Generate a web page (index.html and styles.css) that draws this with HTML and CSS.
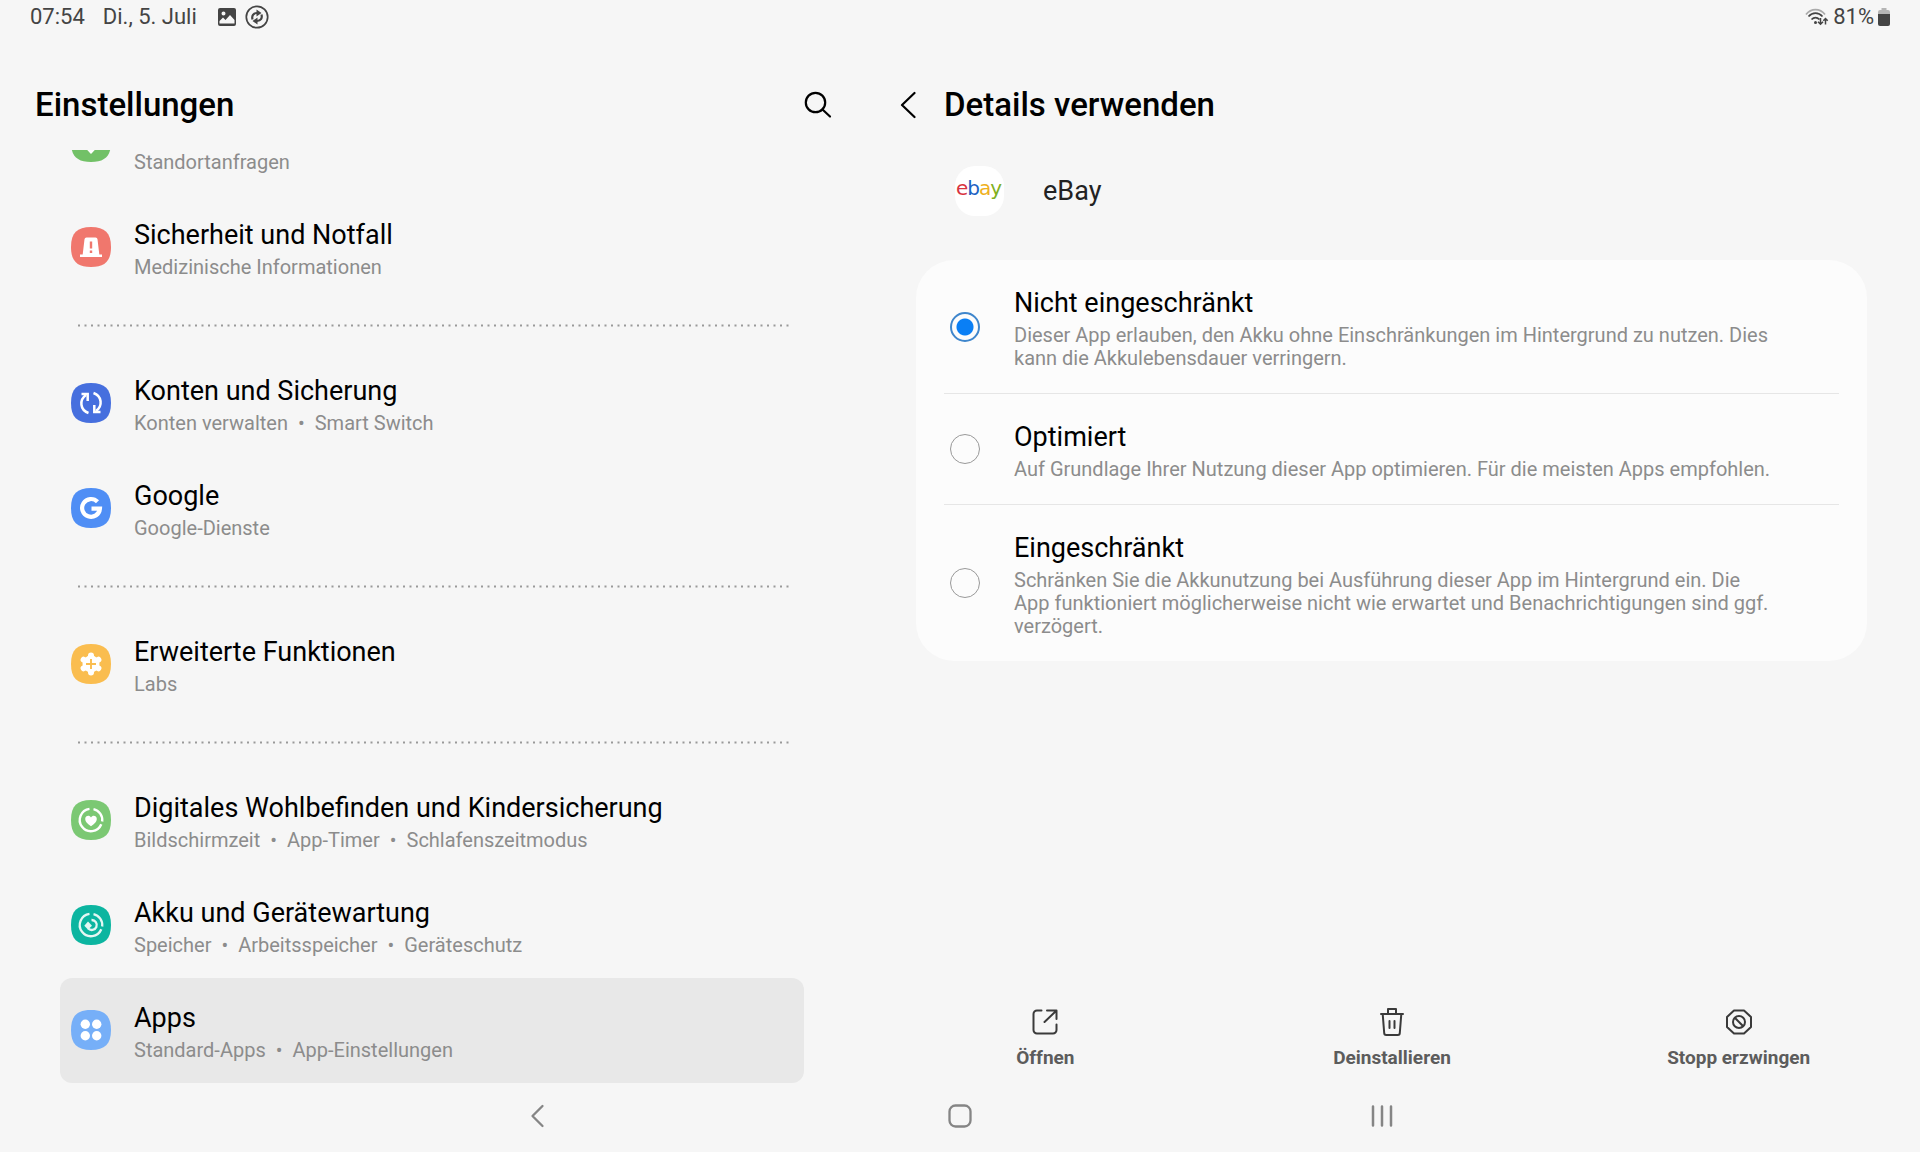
FILE: index.html
```html
<!DOCTYPE html>
<html lang="de">
<head>
<meta charset="utf-8">
<meta name="viewport" content="width=device-width, initial-scale=1">
<title>Einstellungen</title>
<link rel="stylesheet" href="styles.css">
</head>
<body>
<div class="screen">
  <header class="status-bar">
    <div class="status-left">
      <time>07:54</time>
      <span>Di., 5. Juli</span>
      <span class="status-icons">
        <svg width="18" height="18" viewBox="0 0 18 18" aria-hidden="true"><path fill="#444" fill-rule="evenodd" d="M2 0h14a2 2 0 0 1 2 2v14a2 2 0 0 1-2 2H2a2 2 0 0 1-2-2V2a2 2 0 0 1 2-2zM1.500 13v2.500h15V12l-4.500-5-4.500 5-2.500-2.500zM5.500 3.500a2 2 0 1 0 0 4 2 2 0 0 0 0-4z"/></svg>
        <svg width="24" height="24" viewBox="0 0 24 24" aria-hidden="true"><circle cx="12" cy="12" r="10.700" fill="none" stroke="#444" stroke-width="1.700"/><path fill="none" stroke="#444" stroke-width="2.200" d="M7.500 14.500c-1-4 .8-6.300 4.500-6.500M16.500 9.500c1 4-.8 6.300-4.500 6.500"/><path fill="#444" d="M11.500 4.500l5 3.500-5 3.500zM12.500 12.500l-5 3.500 5 3.500z"/></svg>
      </span>
    </div>
    <div class="status-right">
      <svg width="24" height="20" viewBox="0 0 24 20" aria-hidden="true"><g fill="none" stroke-width="1.700"><path stroke="#aaa" d="M1 7.500C6 1 15 1 20 7.500"/><path stroke="#444" d="M3.500 9.500c4-4.500 10-4.500 14 0M6.500 12.500c2.500-2.500 5.500-2.500 8 0"/><path stroke="#444" stroke-width="1.500" d="M15.500 11v6M13 14.800l2.500 2.500 2.500-2.500M20.500 17.500v-6M18.300 13.800l2.200-2.300 2.200 2.300"/></g><circle cx="10.500" cy="15.500" r="1.500" fill="#444"/></svg>
      <span>81%</span>
      <svg width="12" height="18" viewBox="0 0 12 18" aria-hidden="true"><path fill="#b5b5b5" d="M3.500 0h5v2H10a2 2 0 0 1 2 2v3H0V4a2 2 0 0 1 2-2h1.500z"/><path fill="#444" d="M0 6h12v10a2 2 0 0 1-2 2H2a2 2 0 0 1-2-2z"/></svg>
    </div>
  </header>

  <div class="panes">
    <section class="pane-list">
      <div class="pane-header">
        <h1>Einstellungen</h1>
        <button class="icon-button" type="button" aria-label="Suchen">
          <svg width="28" height="28" viewBox="0 0 28 28" fill="none" stroke="#000" stroke-width="2.200" stroke-linecap="round"><circle cx="11.500" cy="11.500" r="9.700"/><path d="M18.500 18.500l7.500 7"/></svg>
        </button>
      </div>
      <nav class="settings-list" aria-label="Einstellungen">
        <a class="item" href="#standort">
          <svg class="badge" viewBox="0 0 40 40" aria-hidden="true"><path fill="#72c167" d="M20 0C34 0 40 6 40 20S34 40 20 40 0 34 0 20 6 0 20 0z"/><path fill="#fff" d="M20 32c-5-5-9-10-9-15a9 9 0 0 1 18 0c0 5-4 10-9 15z"/></svg>
          <span class="item-text"><span class="title"></span><span class="sub">Standortanfragen</span></span>
        </a>
        <a class="item" href="#notfall">
          <svg class="badge" viewBox="0 0 40 40" aria-hidden="true"><path fill="#f0776d" d="M20 0C34 0 40 6 40 20S34 40 20 40 0 34 0 20 6 0 20 0z"/><path fill="#fff" d="M15.500 10.500h9a2 2 0 0 1 2 1.800L28.300 27.500H31V30H9v-2.500h2.700l1.800-15.200a2 2 0 0 1 2-1.800z"/><path stroke="#f0776d" stroke-width="2.400" d="M20 14.500v7M20 23.500v2.500"/></svg>
          <span class="item-text"><span class="title">Sicherheit und Notfall</span><span class="sub">Medizinische Informationen</span></span>
        </a>
        <svg class="dots" aria-hidden="true"><line x1="0" y1="50%" x2="100%" y2="50%"/></svg>
        <a class="item" href="#konten">
          <svg class="badge" viewBox="0 0 40 40" aria-hidden="true"><path fill="#466fde" d="M20 0C34 0 40 6 40 20S34 40 20 40 0 34 0 20 6 0 20 0z"/><path fill="none" stroke="#fff" stroke-width="2.500" d="M17.500 30C9 27 8 17 15 12M22.500 10C31 13 32 23 25 28"/><path fill="none" stroke="#fff" stroke-width="2.500" d="M10.500 11h6.200v7M29.500 29h-6.200v-7"/></svg>
          <span class="item-text"><span class="title">Konten und Sicherung</span><span class="sub">Konten verwalten<i>•</i>Smart Switch</span></span>
        </a>
        <a class="item" href="#google">
          <svg class="badge" viewBox="0 0 40 40" aria-hidden="true"><path fill="#4f8ef5" d="M20 0C34 0 40 6 40 20S34 40 20 40 0 34 0 20 6 0 20 0z"/><path fill="none" stroke="#fff" stroke-width="4.200" d="M26.500 13.800A8.900 8.900 0 1 0 28.900 20.700H20.500"/></svg>
          <span class="item-text"><span class="title">Google</span><span class="sub">Google-Dienste</span></span>
        </a>
        <svg class="dots" aria-hidden="true"><line x1="0" y1="50%" x2="100%" y2="50%"/></svg>
        <a class="item" href="#erweitert">
          <svg class="badge" viewBox="0 0 40 40" aria-hidden="true"><path fill="#fabd4f" d="M20 0C34 0 40 6 40 20S34 40 20 40 0 34 0 20 6 0 20 0z"/><circle cx="20" cy="20" r="8.500" fill="#fff"/><path stroke="#fff" stroke-width="6" stroke-linecap="round" d="M20 11.500v17M12.600 15.750l14.800 8.500M27.400 15.750l-14.800 8.500"/><path stroke="#fabd4f" stroke-width="1.900" d="M20 15v10M15 20h10"/></svg>
          <span class="item-text"><span class="title">Erweiterte Funktionen</span><span class="sub">Labs</span></span>
        </a>
        <svg class="dots" aria-hidden="true"><line x1="0" y1="50%" x2="100%" y2="50%"/></svg>
        <a class="item" href="#wohlbefinden">
          <svg class="badge" viewBox="0 0 40 40" aria-hidden="true"><path fill="#7bc873" d="M20 0C34 0 40 6 40 20S34 40 20 40 0 34 0 20 6 0 20 0z"/><path fill="none" stroke="#fff" stroke-width="2.400" d="M18.500 8.900A11.200 11.200 0 1 0 30.300 24.300M31.200 21.500A11.200 11.200 0 0 0 22.500 9.100"/><path fill="#fff" d="M20 26.200c-3.500-2.300-5.800-4.400-5.800-7.200 0-3.300 4.200-4.300 5.800-1.500 1.600-2.800 5.800-1.800 5.800 1.500 0 2.800-2.300 4.900-5.800 7.200z"/></svg>
          <span class="item-text"><span class="title">Digitales Wohlbefinden und Kindersicherung</span><span class="sub">Bildschirmzeit<i>•</i>App-Timer<i>•</i>Schlafenszeitmodus</span></span>
        </a>
        <a class="item" href="#akku">
          <svg class="badge" viewBox="0 0 40 40" aria-hidden="true"><path fill="#0cb5a0" d="M20 0C34 0 40 6 40 20S34 40 20 40 0 34 0 20 6 0 20 0z"/><path fill="none" stroke="#e4f7f3" stroke-width="2.300" d="M18.500 8.900A11.200 11.200 0 1 0 30.300 24.300M31.200 21.500A11.200 11.200 0 0 0 22.500 9.100"/><path fill="none" stroke="#e4f7f3" stroke-width="2.300" d="M20.500 15a5 5 0 1 1-3.500 8.300"/><path fill="#e4f7f3" d="M17 16.500l4 4.300-4 3.700-3.700-3.700z"/></svg>
          <span class="item-text"><span class="title">Akku und Gerätewartung</span><span class="sub">Speicher<i>•</i>Arbeitsspeicher<i>•</i>Geräteschutz</span></span>
        </a>
        <a class="item item-active" href="#apps" aria-current="page">
          <svg class="badge" viewBox="0 0 40 40" aria-hidden="true"><path fill="#76aff8" d="M20 0C34 0 40 6 40 20S34 40 20 40 0 34 0 20 6 0 20 0z"/><g fill="#fff"><circle cx="14.300" cy="14.300" r="4.700"/><circle cx="25.700" cy="14.300" r="4.700"/><circle cx="14.300" cy="25.700" r="4.700"/><circle cx="25.700" cy="25.700" r="4.700"/></g></svg>
          <span class="item-text"><span class="title">Apps</span><span class="sub">Standard-Apps<i>•</i>App-Einstellungen</span></span>
        </a>
      </nav>
    </section>

    <main class="pane-detail">
      <div class="pane-header">
        <button class="icon-button" type="button" aria-label="Zurück">
          <svg width="16" height="28" viewBox="0 0 16 28" fill="none" stroke="#000" stroke-width="2.200" stroke-linecap="round" stroke-linejoin="round"><path d="M14.500 2L2 14l12.500 12"/></svg>
        </button>
        <h2>Details verwenden</h2>
      </div>
      <div class="app">
        <span class="app-logo" aria-hidden="true"><b class="e">e</b><b class="b">b</b><b class="a">a</b><b class="y">y</b></span>
        <span class="app-name">eBay</span>
      </div>
      <div class="card" role="radiogroup" aria-label="Akkunutzung">
        <label class="option">
          <input type="radio" name="akku" checked>
          <span class="option-text"><span class="title">Nicht eingeschränkt</span><span class="sub">Dieser App erlauben, den Akku ohne Einschränkungen im Hintergrund zu nutzen. Dies kann die Akkulebensdauer verringern.</span></span>
        </label>
        <label class="option">
          <input type="radio" name="akku">
          <span class="option-text"><span class="title">Optimiert</span><span class="sub">Auf Grundlage Ihrer Nutzung dieser App optimieren. Für die meisten Apps empfohlen.</span></span>
        </label>
        <label class="option">
          <input type="radio" name="akku">
          <span class="option-text"><span class="title">Eingeschränkt</span><span class="sub">Schränken Sie die Akkunutzung bei Ausführung dieser App im Hintergrund ein. Die App funktioniert möglicherweise nicht wie erwartet und Benachrichtigungen sind ggf. verzögert.</span></span>
        </label>
      </div>
      <div class="actions">
        <button type="button" class="action">
          <svg width="28" height="28" viewBox="0 0 28 28" fill="none" stroke="#3a3a3a" stroke-width="2" stroke-linecap="round" stroke-linejoin="round" aria-hidden="true"><path d="M10.500 2.500H6A3.500 3.500 0 0 0 2.500 6v16A3.500 3.500 0 0 0 6 25.500h16a3.500 3.500 0 0 0 3.500-3.500v-5.500M16 2.500h9.500V11M25 3L13.500 14"/></svg>
          Öffnen
        </button>
        <button type="button" class="action">
          <svg width="28" height="28" viewBox="0 0 28 28" fill="none" stroke="#3a3a3a" stroke-width="2" stroke-linecap="round" stroke-linejoin="round" aria-hidden="true"><path d="M3 6h22M10 6V1h8v5M4.700 6l1.500 19a2 2 0 0 0 2 2h11.600a2 2 0 0 0 2-2L23.300 6M11.500 13v7M16.500 13v7"/></svg>
          Deinstallieren
        </button>
        <button type="button" class="action">
          <svg width="28" height="28" viewBox="0 0 28 28" fill="none" stroke="#3a3a3a" stroke-width="2" stroke-linejoin="round" aria-hidden="true"><path d="M9 2.500h10L26 9v10l-7 6.500H9L2 19V9z"/><circle cx="14" cy="14" r="6"/><path d="M9.800 9.800l8.400 8.400"/></svg>
          Stopp erzwingen
        </button>
      </div>
    </main>
  </div>

  <footer class="nav-bar">
    <button type="button" class="nav-button" aria-label="Zurück"><svg width="24" height="24" viewBox="0 0 24 24" fill="none" stroke="#858585" stroke-width="2.300" stroke-linecap="round" stroke-linejoin="round"><path d="M16.500 2L6.500 12l10 10"/></svg></button>
    <button type="button" class="nav-button" aria-label="Startseite"><svg width="24" height="24" viewBox="0 0 24 24" fill="none" stroke="#858585" stroke-width="2.300"><rect x="1.500" y="1.500" width="21" height="21" rx="6"/></svg></button>
    <button type="button" class="nav-button" aria-label="Letzte Apps"><svg width="24" height="24" viewBox="0 0 24 24" stroke="#858585" stroke-width="2.500" stroke-linecap="round"><path d="M3 2.500v19M12 2.500v19M21 2.500v19"/></svg></button>
  </footer>
</div>
</body>
</html>
```
FILE: styles.css
```css
* {
  box-sizing: border-box;
}

body {
  margin: 0;
  background: #f6f6f6;
  color: #000;
  font-family: Roboto, "Liberation Sans", sans-serif;
}

button {
  padding: 0;
  border: 0;
  background: none;
  font: inherit;
  cursor: pointer;
}

svg {
  display: block;
  flex: none;
}

.screen {
  display: flex;
  flex-direction: column;
  height: 100vh;
}

/* Status bar */

.status-bar {
  display: flex;
  justify-content: space-between;
  padding: 0 30px;
  color: #444;
  font-size: 22px;
  line-height: 34px;
}

.status-left {
  display: flex;
  gap: 18px;
}

.status-icons {
  display: flex;
  align-items: center;
  gap: 9px;
  padding-left: 3px;
}

.status-right {
  display: flex;
  align-items: center;
  gap: 4px;
}

/* Panes */

.panes {
  display: flex;
  flex: 1;
  min-height: 0;
}

.pane-list,
.pane-detail {
  display: flex;
  flex-direction: column;
}

.pane-list {
  width: 45%;
}

.pane-detail {
  width: 55%;
}

.pane-header {
  display: flex;
  align-items: center;
  height: 116px;
  padding: 26px 32px 0 35px;
  flex: none;
}

.pane-list .pane-header {
  justify-content: space-between;
}

.pane-detail .pane-header {
  gap: 28px;
  padding-left: 36px;
}

h1,
h2 {
  margin: 0;
  font-size: 33px;
  line-height: 38px;
  font-weight: 500;
}

.title {
  min-height: 33px;
  font-size: 27px;
  line-height: 33px;
}

.sub {
  color: #8c8c8c;
  font-size: 20px;
  line-height: 23px;
}

.sub i {
  margin: 0 10px;
  font-style: normal;
}

/* Settings list, scrolled to its end */

.settings-list {
  display: flex;
  flex: 1;
  flex-direction: column;
  justify-content: flex-end;
  min-height: 0;
  padding: 0 60px;
  overflow: hidden;
}

.item {
  display: flex;
  flex: none;
  align-items: center;
  gap: 23px;
  padding: 0 11px;
  border-radius: 12px;
  color: inherit;
  text-decoration: none;
}

.item-active {
  background: #e8e8e8;
}

.badge {
  width: 40px;
  height: 40px;
  margin-bottom: 2px;
}

.item-text,
.option-text {
  display: flex;
  flex-direction: column;
  gap: 4px;
}

.item-text {
  padding: 24px 0 21px;
}

.dots {
  width: calc(100% - 30px);
  height: 51px;
  margin-left: 18px;
}

.dots line {
  stroke: #999;
  stroke-width: 2;
  stroke-dasharray: 2 4.500;
}

/* App details */

.app {
  display: flex;
  align-items: center;
  gap: 39px;
  padding: 16px 91px 44px;
}

.app-logo {
  display: flex;
  align-items: center;
  justify-content: center;
  width: 49px;
  height: 50px;
  padding: 0 2px 6px 0;
  border-radius: 20px;
  background: #fff;
  font-family: "DejaVu Sans", sans-serif;
  font-size: 20px;
  line-height: 24px;
}

.app-logo b {
  margin-right: -1px;
  font-weight: 400;
}

.app-logo .e { color: #d8343f; }
.app-logo .b { color: #1b62c4; }
.app-logo .a { color: #efb01c; }
.app-logo .y { color: #80b01f; }

.app-name {
  color: #222;
  font-size: 27px;
  line-height: 33px;
}

.card {
  margin: 0 53px 0 52px;
  padding: 0 28px;
  border-radius: 38px;
  background: #fcfcfc;
}

.option {
  display: flex;
  align-items: center;
  gap: 34px;
  padding: 27px 64px 23px 6px;
}

.option + .option {
  border-top: 1px solid #e6e6e6;
}

.option input {
  flex: none;
  width: 30px;
  height: 30px;
  margin: 0 0 4px;
  border: 1px solid #999;
  border-radius: 50%;
  appearance: none;
}

.option input:checked {
  border: 2px solid #3f86cc;
  background: radial-gradient(circle, #0a7ff5 8px, #fcfcfc 9px);
}

.actions {
  display: grid;
  grid-template-columns: repeat(3, 1fr);
  margin-top: auto;
  padding: 0 8px 13px;
}

.action {
  display: flex;
  flex-direction: column;
  align-items: center;
  gap: 10px;
  color: #5c5c5c;
  font-size: 19px;
  line-height: 24px;
  font-weight: 700;
}

/* System navigation */

.nav-bar {
  display: grid;
  grid-template-columns: repeat(3, 1fr);
  width: 66%;
  height: 69px;
  margin: 0 auto;
  padding-bottom: 4px;
}

.nav-button {
  display: flex;
  align-items: center;
  justify-content: center;
}
```
